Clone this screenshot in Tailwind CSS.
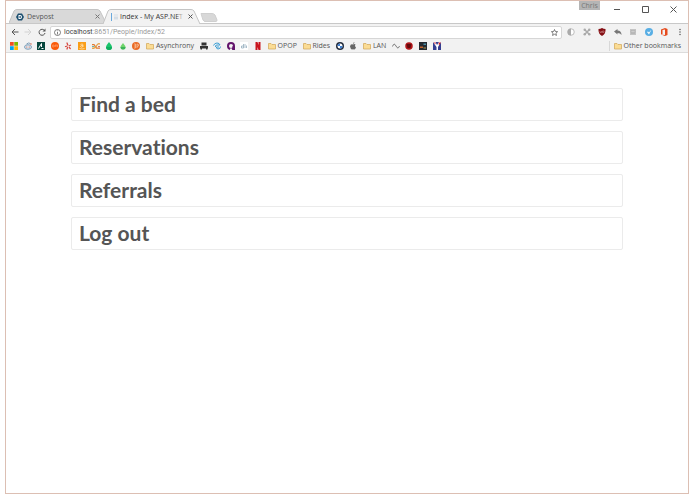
<!DOCTYPE html>
<html lang="en">
<head>
  <meta charset="UTF-8">
  <meta name="viewport" content="width=device-width, initial-scale=1.0">
  <title>Index - My ASP.NET Application</title>
  <script src="https://cdn.jsdelivr.net/npm/@tailwindcss/browser@4"></script>
</head>
<body class="bg-white font-['Open_Sans',sans-serif] text-[7px] leading-[10px] text-[#555]">

<div class="ml-[5px] mr-[6px] min-h-screen border border-[#dcbfb3]">

  <!-- Title bar and tabs -->
  <header class="flex h-[23px] items-end justify-between border-b border-[#c8c8c8]">
    <div class="flex items-end pl-[3px]">
      <div class="relative flex h-[14px] w-[97px] items-center pl-[7px] pr-[6px] pt-px">
        <svg class="absolute inset-0 size-full" viewBox="0 0 97 14" preserveAspectRatio="none"><path d="M0 14 5 2Q6 .5 8 .5H88Q90 .5 91 2L97 14" fill="#d9d9d9" stroke="#c4c4c4"/></svg>
        <svg class="relative size-2" viewBox="0 0 16 16"><path d="M4 1h8l4 7-4 7H4L0 8Z" fill="#1c4f70"/><path d="M5 4h3q4 0 4 4t-4 4H5ZM7 6v4q3 .5 3-2T7 6" fill="#fff" fill-rule="evenodd"/></svg>
        <span class="relative ml-[3px] grow">Devpost</span>
        <button class="relative" aria-label="Close Devpost"><svg class="size-[5px]" viewBox="0 0 5 5"><path d="M.5.5l4 4m0-4-4 4" stroke="#777"/></svg></button>
      </div>
      <div class="relative -mb-px -ml-[3px] flex h-[15px] w-[97px] items-center pl-[8px] pr-[7px] text-[#333]">
        <svg class="absolute inset-0 size-full" viewBox="0 0 97 15" preserveAspectRatio="none"><path d="M0 15 5 2Q6 .5 8 .5H88Q90 .5 91 2L97 15" fill="#f2f2f2" stroke="#c4c4c4"/></svg>
        <svg class="relative size-2 shrink-0" viewBox="0 0 8 8"><path d="M0 0h1v8H0Z" fill="#6aa9dd"/><path d="M3 1h4v6H3Z" fill="#e4e8ec"/><path d="M3 5h4" stroke="#c4d3df"/></svg>
        <span class="relative ml-px w-[64px] overflow-hidden whitespace-nowrap">Index - My ASP.NET<span class="absolute inset-y-0 right-0 w-2 bg-linear-to-r from-transparent to-[#f2f2f2]"></span></span>
        <button class="relative ml-auto" aria-label="Close Index"><svg class="size-[5px]" viewBox="0 0 5 5"><path d="M.5.5l4 4m0-4-4 4" stroke="#555"/></svg></button>
      </div>
      <button class="mb-[1px]" aria-label="New tab"><svg class="h-[9px] w-[18px]" viewBox="0 0 18 9"><path d="M1 .5H12Q14 .5 15 2L17 7Q17 8.500 16 8.500H5Q4 8.500 3 7Z" fill="#d8d8d8" stroke="#cfcfcf"/></svg></button>
    </div>
    <div class="flex h-full items-start text-[#777]">
      <button class="h-[9px] w-[21px] bg-[#b5b5b5] leading-[9px]">Chris</button>
      <button class="ml-[14px] mt-[5px]" aria-label="Minimize"><svg class="size-[7px]" viewBox="0 0 7 7"><path d="M0 3.500h6" stroke="#555"/></svg></button>
      <button class="ml-[21px] mt-[5px]" aria-label="Maximize"><svg class="size-[7px]" viewBox="0 0 7 7"><path d="M.5.5h6v6h-6Z" fill="none" stroke="#555"/></svg></button>
      <button class="ml-[21px] mr-[11px] mt-[5px]" aria-label="Close window"><svg class="size-[7px]" viewBox="0 0 7 7"><path d="M.5.5l6 6m0-6-6 6" stroke="#555"/></svg></button>
    </div>
  </header>

  <!-- Toolbar -->
  <div class="flex h-[15px] items-center bg-[#f2f2f2] pl-[5px] pr-[4px] pt-px">
    <button aria-label="Back"><svg class="size-2" viewBox="0 0 8 8" fill="none" stroke="#555"><path d="M7.500 4H1M4 1 1 4l3 3"/></svg></button>
    <button class="ml-[5px]" aria-label="Forward"><svg class="size-2" viewBox="0 0 8 8" fill="none" stroke="#d2d2d2"><path d="M.5 4H7M4 1l3 3-3 3"/></svg></button>
    <button class="ml-[6px]" aria-label="Reload"><svg class="size-2" viewBox="0 0 8 8" fill="none" stroke="#555"><path d="M6.500 2.500A3 3 0 1 0 7 5"/><path d="M7.500.5v3h-3Z" fill="#555" stroke="none"/></svg></button>
    <div class="ml-[4px] flex h-[13px] grow items-center rounded-xs border border-[#d6d6d6] bg-white px-[3px] font-[Roboto,sans-serif]">
      <svg class="size-[7px] shrink-0" viewBox="0 0 14 14" fill="none" stroke="#555" stroke-width="1.500"><circle cx="7" cy="7" r="6"/><path d="M7 6v5M7 3v1.500"/></svg>
      <label for="address" class="ml-[3px] text-[#444]">localhost</label>
      <input id="address" class="block h-[10px] min-w-0 grow text-[#999] outline-none" type="text" value=":8651/People/Index/52">
      <button aria-label="Bookmark this page"><svg class="size-[7px]" viewBox="0 0 14 14" fill="none" stroke="#555" stroke-width="1.500"><path d="m7 1 1.800 4 4.400.4-3.300 3 1 4.500L7 10.600l-3.900 2.300 1-4.500-3.300-3 4.400-.4Z"/></svg></button>
    </div>
    <div class="ml-[5px] flex w-[117px] items-center justify-between">
      <button aria-label="Contrast"><svg class="size-2" viewBox="0 0 16 16"><circle cx="8" cy="8" r="6.500" fill="#fff" stroke="#aaa" stroke-width="1.500"/><path d="M8 1a7 7 0 0 0 0 14Z" fill="#aaa"/></svg></button>
      <button aria-label="Connections"><svg class="size-2" viewBox="0 0 16 16" fill="#aaa"><path d="m4 4 8 8m0-8-8 8" stroke="#aaa" stroke-width="3"/><circle cx="3.500" cy="3.500" r="2.500"/><circle cx="12.500" cy="3.500" r="2.500"/><circle cx="3.500" cy="12.500" r="2.500"/><circle cx="12.500" cy="12.500" r="2.500"/></svg></button>
      <button aria-label="Ad blocker"><svg class="size-2" viewBox="0 0 16 16"><path d="M8 0q3 2 7 2 1 10-7 14Q0 12 1 2q4 0 7-2Z" fill="#850f14"/><path d="M4 6v3h3V6m2 3h3V6H9Z" fill="none" stroke="#c98a8a" stroke-width="1.200"/></svg></button>
      <button aria-label="Reply"><svg class="size-2" viewBox="0 0 16 16" fill="#777"><path d="m0 7 7-5v3q8 0 8 9-2-4-8-4v3Z"/></svg></button>
      <button aria-label="Reader"><svg class="size-2" viewBox="0 0 16 16"><path d="M2 2h12v12H2Z" fill="#c4c4c4"/><path d="M4 5h8v4H4Zm0 6h8" fill="#ccc" stroke="#aaa"/></svg></button>
      <button aria-label="Compass"><svg class="size-2" viewBox="0 0 16 16"><circle cx="8" cy="8" r="8" fill="#58aee4"/><path d="m4 8 2-1 2 2 5-6-5 10Z" fill="#fff"/></svg></button>
      <button aria-label="Office"><svg class="size-2" viewBox="0 0 16 16"><path d="m2 3 8-3 5 2v12l-5 2-8-3 8 1V3L5 4v8l-3 1Z" fill="#e54a1c"/></svg></button>
      <button aria-label="Menu"><svg class="size-2" viewBox="0 0 16 16" fill="#555"><circle cx="8" cy="3" r="1.500"/><circle cx="8" cy="8" r="1.500"/><circle cx="8" cy="13" r="1.500"/></svg></button>
    </div>
  </div>

  <!-- Bookmarks bar -->
  <nav class="flex h-[14px] items-center justify-between border-b border-[#dcdcdc] bg-[#f2f2f2] pl-[4px] pr-[7px]" aria-label="Bookmarks">
    <div class="flex w-[431px] items-center justify-between">
      <a href="#" aria-label="Microsoft"><svg class="size-2" viewBox="0 0 16 16"><path d="M0 0h7.500v7.500H0Z" fill="#f05024"/><path d="M8.500 0H16v7.500H8.500Z" fill="#7eb900"/><path d="M0 8.500h7.500V16H0Z" fill="#00a3ee"/><path d="M8.500 8.500H16V16H8.500Z" fill="#ffb800"/></svg></a>
      <a href="#" aria-label="Reddit"><svg class="size-2" viewBox="0 0 16 16"><ellipse cx="8" cy="10" rx="7" ry="4.500" fill="#dbe5ed" stroke="#7c9db8" stroke-width="2"/><path d="M5 4l4-2 4 1" fill="none" stroke="#7c9db8" stroke-width="2"/><circle cx="14" cy="4" r="1.500" fill="#e0674a"/><circle cx="5.500" cy="10" r="1.200" fill="#e0674a"/><circle cx="10.500" cy="10" r="1.200" fill="#e0674a"/></svg></a>
      <a href="#" aria-label="Analytics"><svg class="size-2" viewBox="0 0 16 16"><path d="M0 0h16v16H0Z" fill="#06463d"/><path d="M3 13 9 3v7m0 3h4" fill="none" stroke="#fff" stroke-width="2"/></svg></a>
      <a href="#" aria-label="Orange"><svg class="size-2" viewBox="0 0 16 16"><circle cx="8" cy="8" r="8" fill="#fa5a08"/><path d="M3 6v4h3V6Zm5 4V6h2v4m0-4h3v4" fill="none" stroke="#ffae80"/></svg></a>
      <a href="#" aria-label="Yelp"><svg class="size-2" viewBox="0 0 16 16" stroke="#d6453d" stroke-width="2.500" stroke-linecap="round"><path d="M6 2l1.500 4M3 9l2.500-.5M6 14l1-3M10.500 11l2 2M10.500 7.500l2.500-1"/></svg></a>
      <a href="#" aria-label="Amazon"><svg class="size-2" viewBox="0 0 16 16"><path d="M0 0h16v16H0Z" fill="#fa9e18"/><path d="M5 5q5-3 5 1v4M10 7q-5-1-5 2t5 0M3 13q5 2 10 0" fill="none" stroke="#ffe3b8" stroke-width="1.500"/></svg></a>
      <a href="#" aria-label="Routes"><svg class="size-2" viewBox="0 0 16 16" fill="none" stroke-width="2.500"><path d="M0 5h4l5 7h7" stroke="#e3792f"/><path d="M0 12q7 2 9-4t7-4" stroke="#e8a045"/><path d="M0 9h5" stroke="#469c8b" stroke-width="1.500"/><path d="M12 9h4" stroke="#c64a3b" stroke-width="1.500"/></svg></a>
      <a href="#" aria-label="Green drop"><svg class="size-2" viewBox="0 0 16 16"><path d="M8 0q6 7 6 10a6 6 0 0 1-12 0Q2 7 8 0Z" fill="#19c46b"/><path d="M2 10h12a6 6 0 0 1-12 0Z" fill="#0fae5e"/></svg></a>
      <a href="#" aria-label="Small green drop"><svg class="size-2" viewBox="0 0 16 16"><path d="M8 2q5 6 5 8a5 5 0 0 1-10 0Q3 8 8 2Z" fill="#6fd46b"/><path d="M3 10h10a5 5 0 0 1-10 0Z" fill="#3bb457"/></svg></a>
      <a href="#" aria-label="Exchange"><svg class="size-2" viewBox="0 0 16 16"><circle cx="8" cy="8" r="8" fill="#ea6b26"/><path d="M4 4h3v8H4m0-4h3m3 4V4q4 0 3 4l-3 1" fill="none" stroke="#f8c39e" stroke-width="1.500"/></svg></a>
      <a href="#" class="flex items-center gap-[2px]"><svg class="size-2" viewBox="0 0 16 16"><path d="M1 3h5l2 2h7v9H1Z" fill="#fbdc94" stroke="#d3a95c" stroke-width="1.500"/></svg>Asynchrony</a>
      <a href="#" aria-label="Armchair"><svg class="size-2" viewBox="0 0 16 16" fill="#333"><path d="M3 1h10v6H3ZM0 8h16v5H0Zm1 5h3v2H1Zm11 0h3v2h-3Z"/></svg></a>
      <a href="#" aria-label="Swirl"><svg class="size-2" viewBox="0 0 16 16" fill="none" stroke="#3d9fd5" stroke-width="2"><path d="M1 7q2-5 7-5t6 4H8q-4 0-3 4M15 9q0 5-5 5-4-1-3-4h5"/></svg></a>
      <a href="#" aria-label="Purple a"><svg class="size-2" viewBox="0 0 16 16"><circle cx="8" cy="8" r="6" fill="none" stroke="#62136b" stroke-width="4"/><path d="M6 13h4v3H6Z" fill="#f2f2f2"/><path d="M11 8h5v8h-5Z" fill="#62136b"/></svg></a>
      <a href="#" aria-label="Notes"><svg class="size-2" viewBox="0 0 16 16"><path d="M0 0h16v16H0Z" fill="#fff"/><path d="M7 4v8H3V8h4m3-4v8m3-5v5" fill="none" stroke="#8ea8ba" stroke-width="1.500"/></svg></a>
      <a href="#" aria-label="Netflix"><svg class="size-2" viewBox="0 0 16 16"><path d="M3 0h4l2 6V0h4v16H9L7 10v6H3Z" fill="#c9151e"/></svg></a>
      <a href="#" class="flex items-center gap-[2px]"><svg class="size-2" viewBox="0 0 16 16"><path d="M1 3h5l2 2h7v9H1Z" fill="#fbdc94" stroke="#d3a95c" stroke-width="1.500"/></svg>OPOP</a>
      <a href="#" class="flex items-center gap-[2px]"><svg class="size-2" viewBox="0 0 16 16"><path d="M1 3h5l2 2h7v9H1Z" fill="#fbdc94" stroke="#d3a95c" stroke-width="1.500"/></svg>Rides</a>
      <a href="#" aria-label="BMW"><svg class="size-2" viewBox="0 0 16 16"><circle cx="8" cy="8" r="8" fill="#222b3b"/><circle cx="8" cy="8" r="5" fill="#fff"/><path d="M8 8V3a5 5 0 0 0-5 5Zm0 0v5a5 5 0 0 0 5-5Z" fill="#3f7fd0"/></svg></a>
      <a href="#" aria-label="Apple"><svg class="size-2" viewBox="0 0 16 16" fill="#666"><path d="M8 5q3-2 5 0-3 3 1 6-2 5-4 4-2-1-4 0-3-1-4-6 1-6 6-4ZM8 4q0-3 3-4 0 3-3 4Z"/></svg></a>
      <a href="#" class="flex items-center gap-[2px]"><svg class="size-2" viewBox="0 0 16 16"><path d="M1 3h5l2 2h7v9H1Z" fill="#fbdc94" stroke="#d3a95c" stroke-width="1.500"/></svg>LAN</a>
      <a href="#" aria-label="Wave"><svg class="size-2" viewBox="0 0 16 16" fill="none" stroke="#555" stroke-width="1.500"><path d="M1 9q3-9 7-1t7 0"/></svg></a>
      <a href="#" aria-label="Red badge"><svg class="size-2" viewBox="0 0 16 16"><circle cx="8" cy="8" r="7.500" fill="#b3161a"/><path d="M3 4h10l-2 8H5Z" fill="#66090c"/></svg></a>
      <a href="#" aria-label="Game"><svg class="size-2" viewBox="0 0 16 16"><path d="M0 0h16v16H0Z" fill="#252a31"/><path d="M2 9h6v3H2Z" fill="#c4632d"/><path d="M9 3h5v3H9Z" fill="#4a8da5"/><path d="M9 11h5v2H9Z" fill="#b49a51"/></svg></a>
      <a href="#" aria-label="Team"><svg class="size-2" viewBox="0 0 16 16"><path d="M0 0h16v16H0Z" fill="#353f91"/><path d="M0 0h5l3 6 4-6h4l-6 10v6H7v-6Z" fill="#fff"/><path d="M1 1h4v4Zm10 0h5l-4 6Z" fill="#d1272f"/></svg></a>
    </div>
    <a href="#" class="flex items-center gap-[2px] border-l border-[#d8d8d8] pl-[4px]"><svg class="size-2" viewBox="0 0 16 16"><path d="M1 3h5l2 2h7v9H1Z" fill="#fbdc94" stroke="#d3a95c" stroke-width="1.500"/></svg>Other bookmarks</a>
  </nav>

  <!-- Page menu -->
  <main class="mx-[65px] mt-[35px] flex flex-col gap-[10px] font-[Lato,sans-serif] text-[21px] leading-[29px] font-bold text-[#555] [font-variant-ligatures:none]">
    <a href="#" class="rounded-xs border border-[#ebebeb] px-[7px] pb-[2px]">Find a bed</a>
    <a href="#" class="rounded-xs border border-[#ebebeb] px-[7px] pb-[2px]">Reservations</a>
    <a href="#" class="rounded-xs border border-[#ebebeb] px-[7px] pb-[2px]">Referrals</a>
    <a href="#" class="rounded-xs border border-[#ebebeb] px-[7px] pb-[2px]">Log out</a>
  </main>
</div>

</body>
</html>
